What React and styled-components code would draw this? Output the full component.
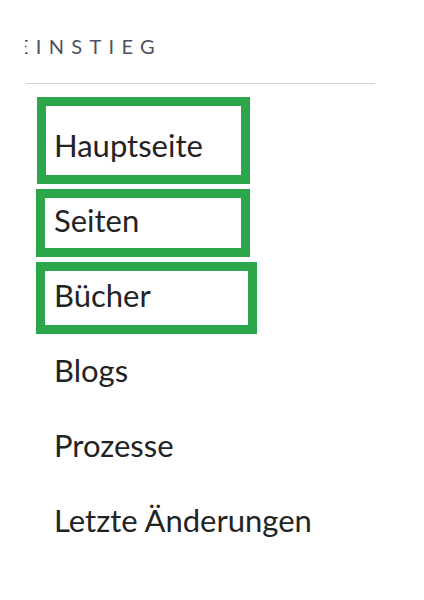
import styled, { createGlobalStyle } from "styled-components";

const GlobalStyle = createGlobalStyle`
  body {
    margin: 0;
    background: #ffffff;
    font-family: Lato, "Open Sans", sans-serif;
  }
`;

const items = [
  "Hauptseite",
  "Seiten",
  "Bücher",
  "Blogs",
  "Prozesse",
  "Letzte Änderungen",
];

// green annotation boxes drawn over the first three entries
const marks = [
  { top: -11, left: 12, width: 213, height: 87 },
  { top: 81, left: 11, width: 214, height: 68 },
  { top: 154, left: 11, width: 221, height: 72 },
];

const App = () => {
  return (
    <>
      <GlobalStyle />
      <Sidebar>
        <HeadingClip>
          <Heading>Einstieg</Heading>
        </HeadingClip>
        <Divider />
        <NavList>
          {items.map((label) => (
            <NavItem key={label}>{label}</NavItem>
          ))}
          {marks.map((m, i) => (
            <Mark key={i} $top={m.top} $left={m.left} $w={m.width} $h={m.height} />
          ))}
        </NavList>
      </Sidebar>
    </>
  );
};

export default App;

const Sidebar = styled.div`
  padding: 35px 0 0 25px;
  width: 350px;
`;

const HeadingClip = styled.div`
  overflow: hidden;
`;

const Heading = styled.h3`
  margin: 0 0 0 -8px;
  font-size: 20px;
  line-height: 23px;
  font-weight: 400;
  letter-spacing: 7.3px;
  text-transform: uppercase;
  color: #4b5162;
  white-space: nowrap;
`;

const Divider = styled.hr`
  margin: 25px 0 0 1px;
  border: 0;
  border-top: 1px solid #d4d4d4;
`;

const NavList = styled.ul`
  position: relative;
  list-style: none;
  margin: 24px 0 0;
  padding: 0 0 0 29px;
`;

const NavItem = styled.li`
  font-size: 31px;
  line-height: 75px;
  color: #232323;
  white-space: nowrap;
`;

const Mark = styled.span`
  position: absolute;
  top: ${(p) => p.$top}px;
  left: ${(p) => p.$left}px;
  width: ${(p) => p.$w}px;
  height: ${(p) => p.$h}px;
  box-sizing: border-box;
  border: 9px solid #2ca64b;
  pointer-events: none;
`;
